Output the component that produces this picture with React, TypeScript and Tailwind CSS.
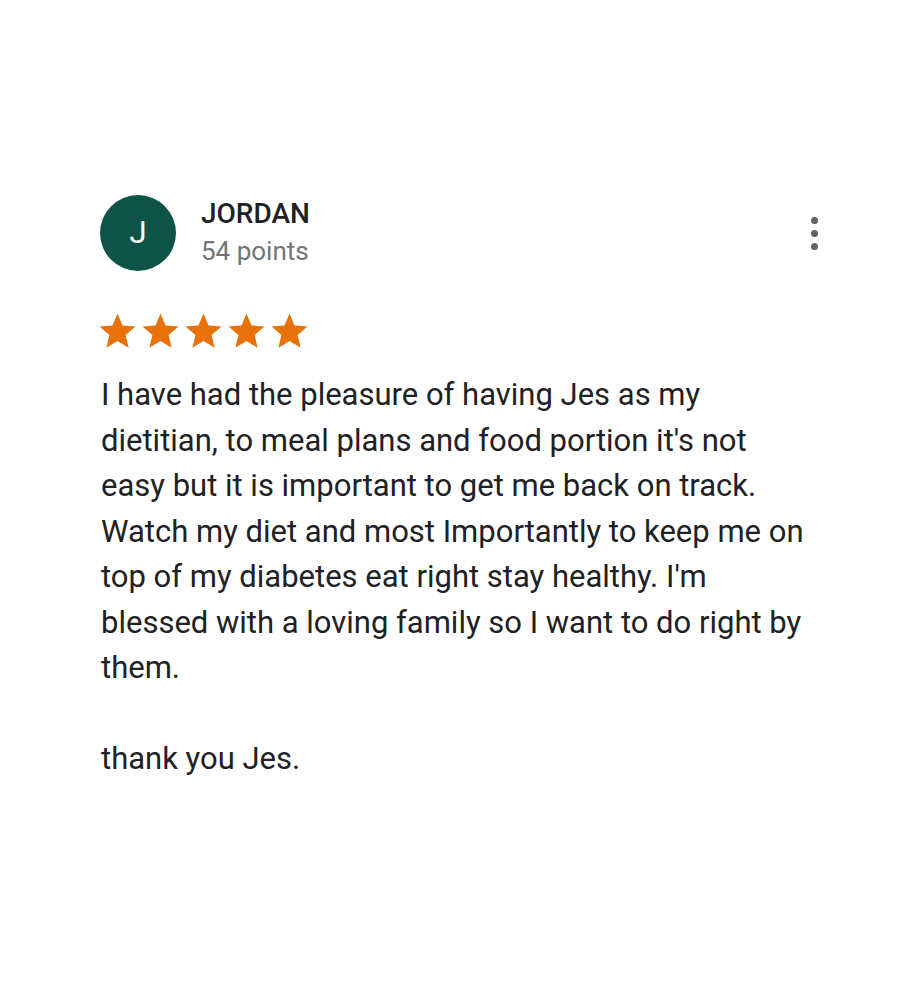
export default function App() {
  const stars = [0, 1, 2, 3, 4]
  return (
    <div className="min-h-screen bg-white" style={{ fontFamily: "Roboto, 'Noto Sans', sans-serif" }}>
      <div className="pl-[101px] pr-[100px] pt-[195px]">
        <div className="flex items-start">
          <div className="w-[76px] h-[76px] rounded-full bg-[#0d5446] flex items-center justify-center text-white text-[31px] -ml-[1px]">
            J
          </div>
          <div className="ml-[25px]">
            <div className="text-[28px] font-medium text-[#202124] leading-[38px]">JORDAN</div>
            <div className="text-[26px] text-[#70757a] leading-[36px]">54 points</div>
          </div>
          <div className="ml-auto mt-[22px] flex flex-col gap-[6px]">
            <span className="w-[7px] h-[7px] rounded-full bg-[#5f6368]" />
            <span className="w-[7px] h-[7px] rounded-full bg-[#5f6368]" />
            <span className="w-[7px] h-[7px] rounded-full bg-[#5f6368]" />
          </div>
        </div>

        <div className="flex mt-[39px] -ml-[5px]">
          {stars.map((i) => (
            <svg key={i} viewBox="0 0 24 24" className="w-[43px] h-[43px]">
              <path fill="#e8710a" d="M12 17.27L18.18 21l-1.64-7.03L22 9.24l-7.19-.61L12 2 9.19 8.63 2 9.24l5.46 4.73L5.82 21z" />
            </svg>
          ))}
        </div>

        <p className="mt-[19px] text-[31px] leading-[45.5px] text-[#202124] whitespace-pre-line max-w-[712px]">
          {"I have had the pleasure of having Jes as my dietitian, to meal plans and food portion it's not easy but it is important to get me back on track. Watch my diet and most Importantly to keep me on top of my diabetes eat right stay healthy. I'm blessed with a loving family so I want to do right by them.\n\nthank you Jes."}
        </p>
      </div>
    </div>
  )
}
